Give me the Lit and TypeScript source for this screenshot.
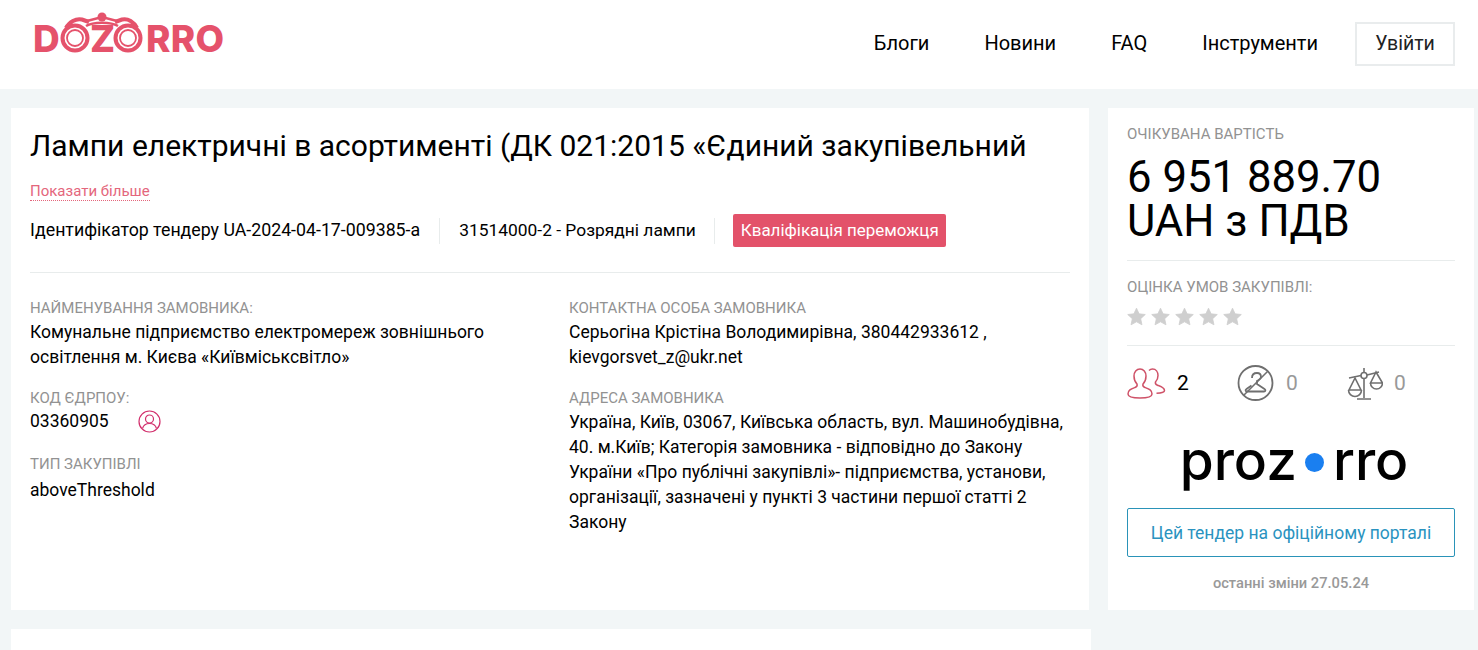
import { LitElement, html, css, svg } from 'lit';
import { customElement } from 'lit/decorators.js';

const logo = svg`<svg class="logo" width="194" height="56" viewBox="0 0 194 56">
  <g fill="#e5526b" font-family="Inter, sans-serif" font-weight="800" font-size="37">
    <text x="0" y="40">D</text>
    <text x="57" y="40">Z</text>
    <text x="113" y="40" letter-spacing="0.3">RRO</text>
  </g>
  <g fill="none" stroke="#e5526b">
    <circle cx="42" cy="26" r="12.500" stroke-width="4"/>
    <circle cx="42" cy="26" r="8" stroke-width="1.800"/>
    <circle cx="95" cy="26" r="12.500" stroke-width="4"/>
    <circle cx="95" cy="26" r="8" stroke-width="1.800"/>
    <path d="M33 16C36 10 43 6 49 7.500L56 10M104 16C101 10 95 6 89 7.500L82 10" stroke-width="4"/>
    <path d="M54 9L69 5L84 9" stroke-width="2.500"/>
    <path d="M53 14C60 9.500 78 9.500 85 14" stroke-width="2.500"/>
  </g>
  <circle cx="69" cy="5" r="4.500" fill="#e5526b"/>
</svg>`;

const star = svg`<svg width="19" height="19" viewBox="0 0 24 24"><path fill="#cfcfcf" stroke="#cfcfcf" stroke-width="1" stroke-linejoin="round" d="M12 1.500l3.300 7.100 7.800.9-5.800 5.300 1.600 7.700L12 18.700l-6.900 3.800 1.600-7.700L.9 9.500l7.800-.9z"/></svg>`;

const people = svg`<svg width="39" height="31" viewBox="0 0 39 31" fill="none" stroke="#cf5268" stroke-width="1.500">
  <path d="M1 26c0-4 3-5 7-6.500 2-.8 2.500-2 2-3.500-2-2-3-5-3-8 0-4 2.500-7 6-7s6 3 6 7c0 3-1 6-3 8-.5 1.500 0 2.700 2 3.500 4 1.500 7 2.500 7 6.500 0 3-5 4-12 4s-12-1-12-4z"/>
  <path d="M22 2.500c1-1 2-1.500 3.500-1.500 3.500 0 5.500 3 5.500 6.500 0 2.500-1 5-2.500 6.500-.5 1.500 0 2.500 2 3.200 3.500 1.300 7 2.300 7 5.300 0 1.500-1.500 2.500-8 2.800"/>
</svg>`;

const hanger = svg`<svg width="38" height="36" viewBox="0 0 38 36" fill="none" stroke="#6f6f6f" stroke-width="1.800">
  <circle cx="18.500" cy="18" r="17"/>
  <path d="M7 30L31 6" stroke-width="1.600"/>
  <path d="M15 13c0-3 2-5 5-5s4 2 4 4-2.500 3-4 4v3l7.500 5c1.500 1 1 2.500-.5 2.500H10c-1.500 0-2-1.500-.5-2.500l5-3.500"/>
</svg>`;

const scales = svg`<svg width="36" height="33" viewBox="0 0 36 33" fill="none" stroke="#6f6f6f" stroke-width="1.600">
  <circle cx="17" cy="8.500" r="3"/>
  <path d="M17 1v4M17 12v19M10 32h14M2 11l12-2.500M20 8l12-3"/>
  <path d="M8 11L2 23h12zM1.500 23a6.500 6.500 0 0 0 13 0"/>
  <path d="M29 5l-5.500 11h12zM23.500 16a6 6 0 0 0 12 0"/>
</svg>`;

const cabinet = svg`<svg width="23" height="23" viewBox="0 0 23 23" fill="none" stroke="#d22f6c" stroke-width="1.200">
  <circle cx="11.500" cy="11.500" r="10.500"/>
  <circle cx="11.500" cy="9" r="4"/>
  <path d="M4.500 18.500c1-3.500 3.500-5 7-5s6 1.500 7 5"/>
</svg>`;

@customElement('app-root')
export class AppRoot extends LitElement {
  static styles = css`
    :host {
      display: block;
      height: 650px;
      overflow: hidden;
      background: #f2f6f7;
      font-family: Roboto, sans-serif;
      color: #000;
    }
    .header {
      height: 89px;
      box-sizing: border-box;
      background: #fff;
      display: flex;
      align-items: center;
      padding: 0 23px 2px 33px;
    }
    .logo {
      display: block;
      margin-top: -7px;
    }
    .nav {
      margin-left: auto;
      display: flex;
      align-items: center;
      gap: 55px;
      font-size: 20px;
    }
    .nav .link {
      margin-top: -2px;
    }
    .login {
      margin-left: -18px;
      border: 2px solid #e9eced;
      width: 100px;
      height: 44px;
      box-sizing: border-box;
      display: flex;
      align-items: center;
      justify-content: center;
      font-size: 19.500px;
      color: #222;
    }
    .main {
      display: grid;
      grid-template-columns: 1078px 366px;
      gap: 19px;
      padding: 19px 0 0 11px;
    }
    .card {
      background: #fff;
      height: 502px;
      box-sizing: border-box;
    }
    .details {
      padding: 18px 19px 0;
    }
    h1 {
      margin: 0;
      font-size: 30px;
      font-weight: 400;
      line-height: 40px;
    }
    .more {
      display: inline-block;
      margin-top: 17px;
      font-size: 15px;
      line-height: 17px;
      color: #e4667c;
      border-bottom: 1px dotted #e4667c;
    }
    .meta {
      display: flex;
      align-items: center;
      margin-top: 13px;
      padding-bottom: 25px;
      border-bottom: 1px solid #e8ecec;
      font-size: 16.950px;
    }
    .meta span {
      padding: 0 19px 1px 0;
      margin-right: 19px;
      border-right: 1px solid #e8ecec;
      line-height: 25px;
    }
    .meta .id {
      font-size: 17.750px;
    }
    .meta .cpv {
      font-size: 17.400px;
      padding-right: 18px;
      margin-right: 18px;
    }
    .badge {
      background: #e3526a;
      color: #fff;
      border-radius: 2px;
      padding: 0 7px 0 8px;
      line-height: 33px;
    }
    .columns {
      display: grid;
      grid-template-columns: 539px 1fr;
      margin-top: 25px;
    }
    .field {
      margin-bottom: 18px;
    }
    .label {
      font-size: 15px;
      line-height: 21px;
      margin-bottom: 1px;
      color: #929292;
    }
    .value {
      font-size: 17.500px;
      line-height: 25px;
    }
    .value.low {
      margin-top: 3px;
    }
    .code {
      display: flex;
      align-items: center;
      gap: 29px;
      min-height: 29px;
      margin: -3px 0 4px;
    }
    .side {
      padding: 16px 19px 0;
    }
    .amount {
      font-size: 43.700px;
      line-height: 44px;
      margin-top: 10px;
      padding-bottom: 17px;
      border-bottom: 1px solid #e8ecec;
    }
    .rating {
      padding: 16px 0 19px;
      border-bottom: 1px solid #e8ecec;
    }
    .stars {
      display: flex;
      gap: 5px;
      margin-top: 9px;
    }
    .stars svg {
      display: block;
    }
    .stats {
      display: grid;
      grid-template-columns: 110px 110px 1fr;
      align-items: center;
      margin-top: 19px;
      font-size: 21px;
      color: #999;
    }
    .stat {
      display: flex;
      align-items: center;
      gap: 11px;
    }
    .stat.active {
      color: #000;
    }
    .prozorro {
      display: flex;
      align-items: center;
      justify-content: center;
      height: 50px;
      margin: 34px 0 0 6px;
      font-family: Inter, sans-serif;
      font-size: 55px;
      font-weight: 500;
      line-height: 50px;
    }
    .dot {
      width: 19px;
      height: 19px;
      margin: 4px 9px 0 8px;
      border-radius: 50%;
      background: #1a7ff0;
    }
    .portal {
      display: flex;
      align-items: center;
      justify-content: center;
      height: 49px;
      box-sizing: border-box;
      margin-top: 23px;
      border: 1px solid #2a93b8;
      border-radius: 2px;
      color: #2a93c0;
      font-size: 17.500px;
    }
    .changed {
      margin-top: 17px;
      text-align: center;
      font-size: 14.700px;
      font-weight: 500;
      color: #999;
    }
    .next {
      width: 1080px;
      height: 60px;
      margin: 19px 0 0 11px;
      background: #fff;
    }
  `;

  render() {
    return html`
      <div class="header">
        ${logo}
        <div class="nav">
          <a class="link">Блоги</a><a class="link">Новини</a><a class="link">FAQ</a><a class="link">Інструменти</a>
          <a class="login">Увійти</a>
        </div>
      </div>
      <div class="main">
        <div class="card details">
          <h1>Лампи електричні в асортименті (ДК 021:2015 «Єдиний закупівельний</h1>
          <a class="more">Показати більше</a>
          <div class="meta">
            <span class="id">Ідентифікатор тендеру UA-2024-04-17-009385-a</span>
            <span class="cpv">31514000-2 - Розрядні лампи</span>
            <div class="badge">Кваліфікація переможця</div>
          </div>
          <div class="columns">
            <div>
              <div class="field">
                <div class="label">НАЙМЕНУВАННЯ ЗАМОВНИКА:</div>
                <div class="value">Комунальне підприємство електромереж зовнішнього<br />освітлення м. Києва «Київміськсвітло»</div>
              </div>
              <div class="field">
                <div class="label">КОД ЄДРПОУ:</div>
                <div class="value code">03360905 ${cabinet}</div>
              </div>
              <div class="field">
                <div class="label">ТИП ЗАКУПІВЛІ</div>
                <div class="value low">aboveThreshold</div>
              </div>
            </div>
            <div>
              <div class="field">
                <div class="label">КОНТАКТНА ОСОБА ЗАМОВНИКА</div>
                <div class="value">Серьогіна Крістіна Володимирівна, 380442933612 ,<br />kievgorsvet_z@ukr.net</div>
              </div>
              <div class="field">
                <div class="label">АДРЕСА ЗАМОВНИКА</div>
                <div class="value">Україна, Київ, 03067, Київська область, вул. Машинобудівна,<br />40. м.Київ; Категорія замовника - відповідно до Закону<br />України «Про публічні закупівлі»- підприємства, установи,<br />організації, зазначені у пункті 3 частини першої статті 2<br />Закону</div>
              </div>
            </div>
          </div>
        </div>
        <div class="card side">
          <div class="label">ОЧІКУВАНА ВАРТІСТЬ</div>
          <div class="amount">6 951 889.70<br />UAH з ПДВ</div>
          <div class="rating">
            <div class="label">ОЦІНКА УМОВ ЗАКУПІВЛІ:</div>
            <div class="stars">${star}${star}${star}${star}${star}</div>
          </div>
          <div class="stats">
            <div class="stat active">${people}2</div>
            <div class="stat">${hanger}0</div>
            <div class="stat">${scales}0</div>
          </div>
          <div class="prozorro">proz<i class="dot"></i>rro</div>
          <a class="portal">Цей тендер на офіційному порталі</a>
          <div class="changed">останні зміни 27.05.24</div>
        </div>
      </div>
      <div class="next"></div>
    `;
  }
}
